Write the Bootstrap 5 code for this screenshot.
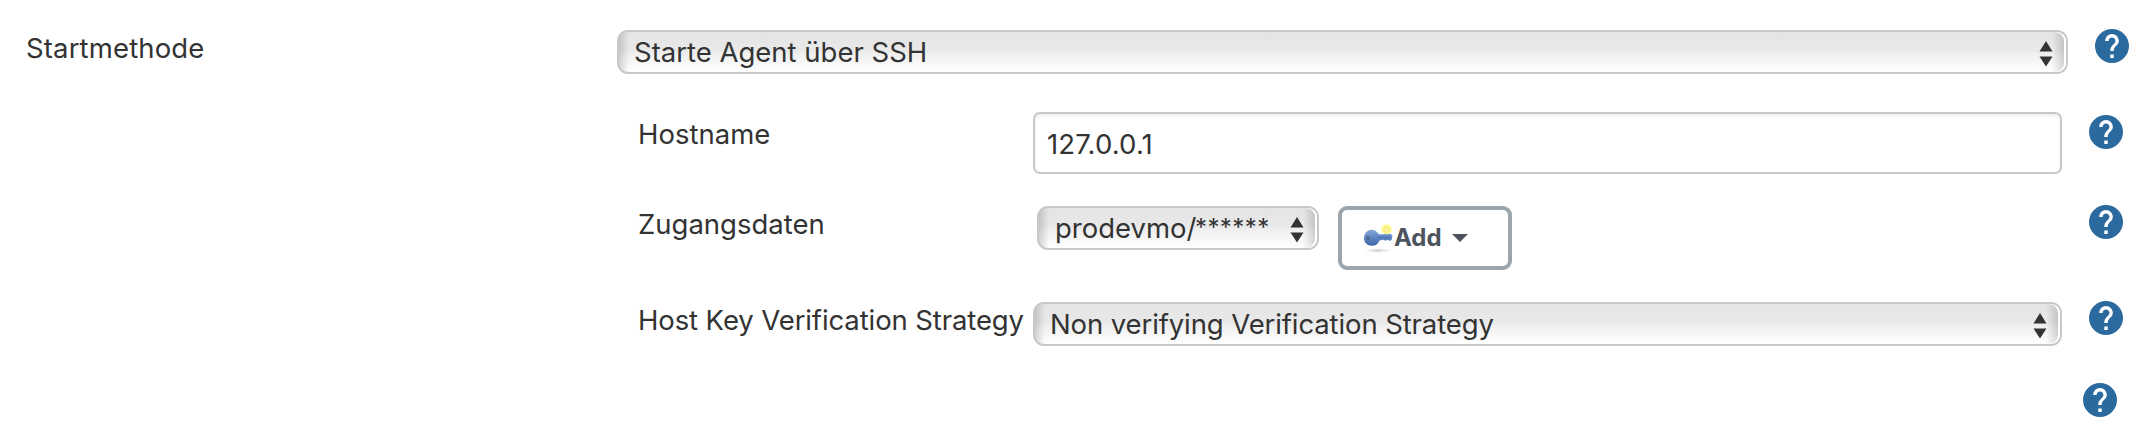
<!DOCTYPE html>
<html lang="de">
<head>
<meta charset="utf-8">
<meta name="viewport" content="width=device-width, initial-scale=1">
<title>Startmethode</title>
<link href="https://cdn.jsdelivr.net/npm/bootstrap@5.3.0/dist/css/bootstrap.min.css" rel="stylesheet">
<style>
body{font-family:Inter,"Liberation Sans",sans-serif;font-size:27.5px;line-height:34px;color:#333;background:#fff}
.settings{display:grid;grid-template-rows:82px 94px 96px 81px auto;padding-top:30px}
.line{display:grid;grid-template-columns:591px 1451px 1fr;padding-left:26px;align-items:start}
.line.sub{grid-template-columns:395px 1029px 1fr;padding-left:638px}
.lbl{white-space:nowrap;padding-top:1px}
.lbl.low{padding-top:5px}
.wide{letter-spacing:.15px}
.tight{letter-spacing:-.11px}
.pick{position:relative;height:44px;border:2px solid #c8c8c8;border-radius:11px;padding:3px 13px 0 15px;white-space:nowrap;
background:linear-gradient(90deg,rgba(0,0,0,.15),transparent 10px),linear-gradient(#e4e4e4,#e9e9e9 48%,#eee 52%,#fff);box-shadow:inset -2px 0 0 #fff}
.pick::after{content:"";position:absolute;top:0;bottom:0;right:2px;width:12px;border-radius:0 9px 9px 0;background:linear-gradient(270deg,rgba(0,0,0,.15),transparent);box-shadow:2px 0 0 #fff}
.arrows{margin-top:5.500px}
.cred{width:282px;margin-left:4px;padding-left:16px}
.stars{font-size:24px;letter-spacing:.4px;line-height:1;display:inline-block;transform:translateY(-2px);margin-left:-1.500px}
.field{height:62px;border:2px solid #c8c8c8;border-radius:7px;padding:13px 12px;box-shadow:inset 0 2px 3px rgba(0,0,0,.07);letter-spacing:.15px}
.addbtn{width:174px;height:64px;border:4px solid #9aa6ac;border-radius:9px;background:#fff;color:#4d545d;font-size:24px;line-height:30px;font-weight:700;padding:13px 0 0 20px;margin-left:19px}
.tip{margin-left:27px;width:34px;height:34px}
svg{display:block;flex:none}
</style>
</head>
<body>
<svg width="0" height="0" class="position-absolute"><defs>
<symbol id="help" viewBox="2 2 20 20"><circle cx="12" cy="12" r="10" fill="#2b6a9e"/><path fill="#fff" d="M13 19h-2v-2h2v2zm2.070-7.750l-.9.920C13.450 12.900 13 13.500 13 15h-2v-.5c0-1.100.45-2.100 1.170-2.830l1.240-1.260c.37-.36.59-.86.59-1.410 0-1.100-.9-2-2-2s-2 .9-2 2H8c0-2.210 1.790-4 4-4s4 1.790 4 4c0 .88-.36 1.680-.93 2.250z"/></symbol>
<symbol id="updown" viewBox="0 0 14 26"><path fill="#333" d="M7 0l6.500 10.500H.5zM7 25.500L.5 15.500h13z"/></symbol>
</defs></svg>
<main class="settings">
  <div class="line">
    <div class="lbl wide">Startmethode</div>
    <div class="pick d-flex justify-content-between"><span>Starte Agent über SSH</span><svg class="arrows" width="14" height="26"><use href="#updown"/></svg></div>
    <svg class="tip" style="margin-top:-1px"><use href="#help"/></svg>
  </div>
  <div class="line sub">
    <div class="lbl low">Hostname</div>
    <div class="field">127.0.0.1</div>
    <svg class="tip" style="margin-top:3px"><use href="#help"/></svg>
  </div>
  <div class="line sub">
    <div class="lbl">Zugangsdaten</div>
    <div class="d-flex align-items-start">
      <div class="pick cred d-flex justify-content-between"><span>prodevmo/<span class="stars">******</span></span><svg class="arrows" width="14" height="26"><use href="#updown"/></svg></div>
      <button type="button" class="addbtn d-flex align-items-start">
        <svg width="32" height="32" viewBox="0 0 32 32">
          <defs>
            <radialGradient id="glow"><stop offset="0" stop-color="#fffde0"/><stop offset=".25" stop-color="#f6ee82"/><stop offset=".7" stop-color="#fdf68a"/><stop offset="1" stop-color="#fff9a0" stop-opacity="0"/></radialGradient>
            <radialGradient id="shade"><stop offset="0" stop-color="#c8c8c8"/><stop offset="1" stop-color="#ddd" stop-opacity="0"/></radialGradient>
            <linearGradient id="steel" x2="0" y2="1"><stop offset="0" stop-color="#87a9d9"/><stop offset=".5" stop-color="#5d86c4"/><stop offset="1" stop-color="#4169a9"/></linearGradient>
          </defs>
          <ellipse cx="16" cy="27.500" rx="14" ry="2.500" fill="url(#shade)"/>
          <circle cx="24.500" cy="6.500" r="6" fill="url(#glow)"/>
          <g transform="translate(0 .8)">
            <path fill="url(#steel)" d="M9 6c4 0 6 2 8 4.500l12-.3 1.500 2-1 4.300-2 .5-2-1-2 1-2-1-4 .8c-1 3.500-4 5.200-7.500 5.200C5 22 2 18.500 2 14.500S5 6 9 6z"/>
            <ellipse cx="6" cy="14.500" rx="1.800" ry="2.600" fill="#526b91"/>
            <path fill="none" stroke="#486da6" stroke-width="1.200" d="M15 13.500h13"/>
          </g>
        </svg><span>Add</span>
        <svg width="16" height="8" viewBox="0 0 16 8" style="margin:11px 0 0 10px"><path fill="#4d545d" d="M0 0h16L8 8z"/></svg>
      </button>
    </div>
    <svg class="tip" style="margin-top:-1px"><use href="#help"/></svg>
  </div>
  <div class="line sub">
    <div class="lbl tight">Host Key Verification Strategy</div>
    <div class="pick tight d-flex justify-content-between"><span>Non verifying Verification Strategy</span><svg class="arrows" width="14" height="26"><use href="#updown"/></svg></div>
    <svg class="tip" style="margin-top:-1px"><use href="#help"/></svg>
  </div>
  <div class="d-flex justify-content-end" style="padding-right:21px"><svg class="tip"><use href="#help"/></svg></div>
</main>
</body>
</html>
